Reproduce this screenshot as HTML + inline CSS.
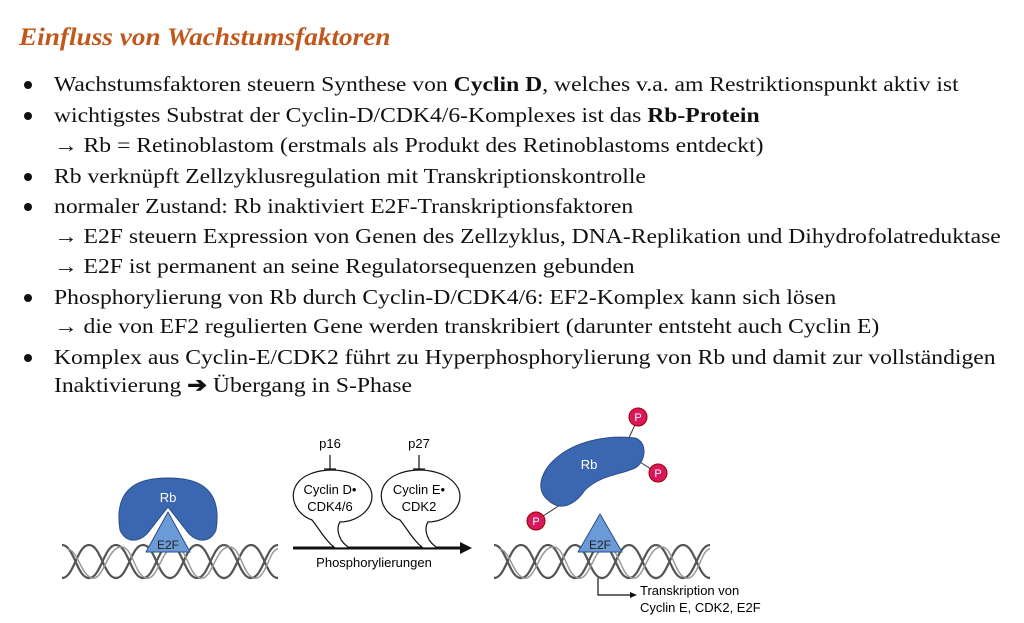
<!DOCTYPE html>
<html><head><meta charset="utf-8"><style>
body{margin:0;width:1024px;height:623px;background:#fff;overflow:hidden;position:relative;font-family:"Liberation Serif",serif;color:#111}
.t{position:absolute;left:19px;top:24px;font-size:25px;font-weight:bold;font-style:italic;color:#c0581c;transform:scaleX(1.09);transform-origin:left}
.l{position:absolute;left:54px;font-size:21px;white-space:nowrap;line-height:24px;transform:scaleX(1.125);transform-origin:left}
.b{position:absolute;left:24px;width:8px;height:8px;border-radius:50%;background:#111}
svg{position:absolute;left:0;top:0}
</style></head><body>
<div class="t">Einfluss von Wachstumsfaktoren</div>
<div class="b" style="top:81px"></div><div class="l" style="top:72px">Wachstumsfaktoren steuern Synthese von <b>Cyclin D</b>, welches v.a. am Restriktionspunkt aktiv ist</div>
<div class="b" style="top:112px"></div><div class="l" style="top:103px">wichtigstes Substrat der Cyclin-D/CDK4/6-Komplexes ist das <b>Rb-Protein</b></div>
<div class="l" style="top:133px">→ Rb = Retinoblastom (erstmals als Produkt des Retinoblastoms entdeckt)</div>
<div class="b" style="top:173px"></div><div class="l" style="top:164px">Rb verknüpft Zellzyklusregulation mit Transkriptionskontrolle</div>
<div class="b" style="top:203px"></div><div class="l" style="top:194px">normaler Zustand: Rb inaktiviert E2F-Transkriptionsfaktoren</div>
<div class="l" style="top:224px">→ E2F steuern Expression von Genen des Zellzyklus, DNA-Replikation und Dihydrofolatreduktase</div>
<div class="l" style="top:254px">→ E2F ist permanent an seine Regulatorsequenzen gebunden</div>
<div class="b" style="top:294px"></div><div class="l" style="top:285px">Phosphorylierung von Rb durch Cyclin-D/CDK4/6: EF2-Komplex kann sich lösen</div>
<div class="l" style="top:314px">→ die von EF2 regulierten Gene werden transkribiert (darunter entsteht auch Cyclin E)</div>
<div class="b" style="top:354px"></div><div class="l" style="top:345px">Komplex aus Cyclin-E/CDK2 führt zu Hyperphosphorylierung von Rb und damit zur vollständigen</div>
<div class="l" style="top:373px">Inaktivierung <b>➔</b> Übergang in S-Phase</div>
<svg width="1024" height="623" font-family="Liberation Sans, sans-serif">
<defs>
<g id="dna" fill="none" stroke="#555" stroke-width="2.2">
<path d="M0 0 C12 0 15 33 27 33 S42 0 54 0 S69 33 81 33 S96 0 108 0 S123 33 135 33 S150 0 162 0 S177 33 189 33 S204 0 216 0"/>
<path d="M0 33 C12 33 15 0 27 0 S42 33 54 33 S69 0 81 0 S96 33 108 33 S123 0 135 0 S150 33 162 33 S177 0 189 0 S204 33 216 33"/>
<path d="M6 4 C16 6 19 30 30 33 S45 4 58 2 S72 30 84 33 S99 4 112 2 S126 30 138 33 S153 4 166 2 S180 30 192 33 S207 4 216 4" stroke="#999" stroke-width="1.5"/>
</g>
</defs>
<use href="#dna" x="62" y="545"/>
<path d="M120 530 C112 480 150 478 168 478 C186 478 224 480 216 530 C210 545 194 542 186 530 L168 507 L150 530 C142 542 126 545 120 530Z" fill="#3b67b0" stroke="#2a4d8a"/>
<text x="168" y="502" fill="#fff" font-size="13" text-anchor="middle">Rb</text>
<path d="M168 512 L190 552 L146 552Z" fill="#6b9bd6" stroke="#2a4d8a" stroke-linejoin="round"/>
<text x="168" y="549" fill="#222" font-size="12" text-anchor="middle">E2F</text>
<line x1="293" y1="548" x2="462" y2="548" stroke="#111" stroke-width="3"/>
<path d="M460 542 L472 548 L460 554Z" fill="#111"/>
<text x="374" y="567" font-size="13" text-anchor="middle">Phosphorylierungen</text>
<g fill="#fff" stroke="#111" stroke-width="1.2">
<path d="M312 520 C290 512 285 484 310 474 C330 466 360 470 370 488 C378 505 360 522 340 522 C335 530 340 543 350 548 L335 548 C325 540 320 530 312 520Z"/>
<path d="M400 520 C378 512 373 484 398 474 C418 466 448 470 458 488 C466 505 448 522 428 522 C423 530 428 543 438 548 L423 548 C413 540 408 530 400 520Z"/>
</g>
<text x="330" y="494" font-size="13" text-anchor="middle">Cyclin D•</text>
<text x="330" y="511" font-size="13" text-anchor="middle">CDK4/6</text>
<text x="419" y="494" font-size="13" text-anchor="middle">Cyclin E•</text>
<text x="419" y="511" font-size="13" text-anchor="middle">CDK2</text>
<text x="330" y="448" font-size="13" text-anchor="middle">p16</text>
<text x="419" y="448" font-size="13" text-anchor="middle">p27</text>
<g stroke="#111" stroke-width="1.2"><path d="M330 455 V469 M324 469 H336 M419 455 V469 M413 469 H425"/></g>
<use href="#dna" x="494" y="545"/>
<g stroke="#333"><line x1="628" y1="440" x2="638" y2="418"/><line x1="640" y1="462" x2="657" y2="473"/><line x1="560" y1="505" x2="537" y2="520"/></g>
<path d="M548 500 C535 490 540 470 560 455 C580 440 610 435 635 438 C648 442 646 462 635 468 C620 475 600 475 585 490 C575 505 560 512 548 500Z" fill="#3b67b0" stroke="#2a4d8a"/>
<text x="589" y="469" fill="#fff" font-size="13" text-anchor="middle">Rb</text>
<g fill="#d8185a" stroke="#900"><circle cx="638" cy="417" r="9"/><circle cx="658" cy="473" r="9"/><circle cx="536" cy="521" r="9"/></g>
<g fill="#fff" font-size="11" text-anchor="middle"><text x="638" y="421">P</text><text x="658" y="477">P</text><text x="536" y="525">P</text></g>
<path d="M600 514 L622 552 L578 552Z" fill="#6b9bd6" stroke="#2a4d8a" stroke-linejoin="round"/>
<text x="600" y="549" fill="#222" font-size="12" text-anchor="middle">E2F</text>
<path d="M598 578 V595 H632" fill="none" stroke="#111" stroke-width="1.2"/><path d="M630 592 L637 595 L630 598Z" fill="#111"/>
<text x="640" y="595" font-size="13">Transkription von</text>
<text x="640" y="612" font-size="13">Cyclin E, CDK2, E2F</text>
</svg>
</body></html>
